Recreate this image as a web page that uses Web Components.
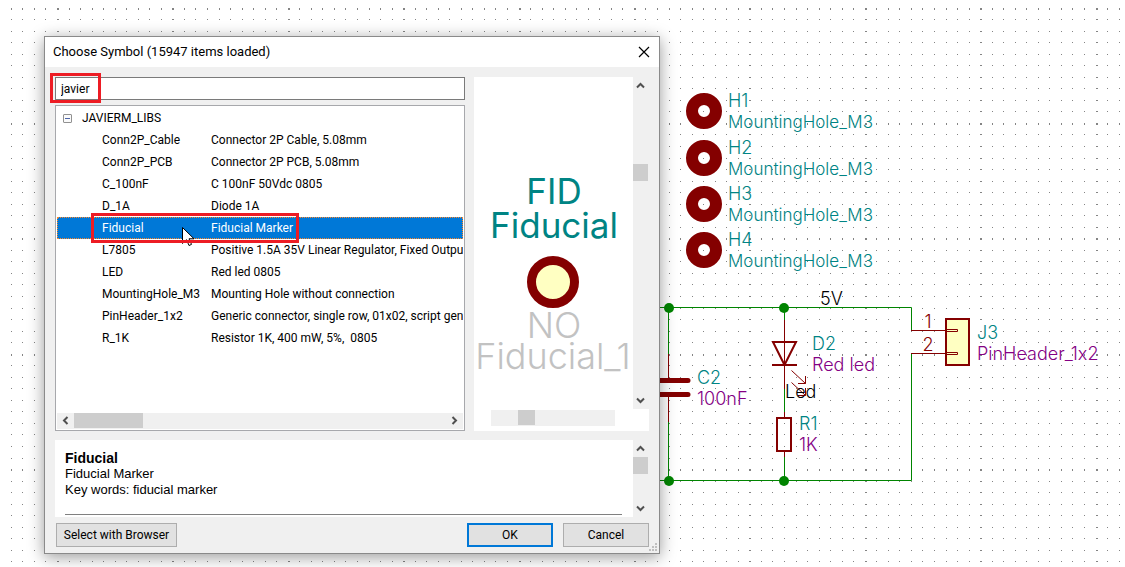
<!DOCTYPE html>
<html lang="en">
<head>
<meta charset="utf-8">
<title>Choose Symbol</title>
<style>
  body { margin: 0; background: #fff; font: 12px/16px Roboto, "Open Sans", sans-serif; color: #000; }
</style>
</head>
<body>
<schematic-editor>
  <symbol-dialog heading="Choose Symbol (15947 items loaded)"></symbol-dialog>
</schematic-editor>

<script>
const define = (name, html, setup) => {
  const template = document.createElement('template');
  template.innerHTML = html;
  customElements.define(name, class extends HTMLElement {
    constructor() {
      super();
      this.attachShadow({ mode: 'open' }).append(template.content.cloneNode(true));
    }
    connectedCallback() { if (setup) setup(this, this.shadowRoot); }
  });
};

/* Scroll bar: two arrow buttons and a thumb; --start and --size place the thumb on the track. */
define('scroll-bar', `
<style>
  :host { display: flex; flex-direction: column; width: 16px; background: #f0f0f0; }
  :host([horizontal]) { flex-direction: row; width: auto; height: 16px; }
  button { flex: none; width: 15px; height: 17px; margin: 0; padding: 0; border: 0; background: none; display: grid; place-items: center; }
  :host([horizontal]) button { width: 17px; height: 15px; }
  :host([horizontal]) svg { transform: rotate(-90deg); }
  :host([bare]) button { visibility: hidden; width: 0; }
  .track { flex: 1; display: flex; flex-direction: column; padding-top: var(--start, 0px); }
  .thumb { width: 15px; height: var(--size, 17px); background: #cdcdcd; }
  :host([horizontal]) .track { flex-direction: row; padding: 0 0 0 var(--start, 0px); }
  :host([horizontal]) .thumb { width: var(--size, 17px); height: 15px; }
  path { fill: none; stroke: #505050; stroke-width: 2; }
</style>
<button tabindex="-1" aria-label="Scroll back"><svg width="9" height="7"><path d="M1 5.5 4.5 2 8 5.5"/></svg></button>
<div class="track"><div class="thumb"></div></div>
<button tabindex="-1" aria-label="Scroll forward"><svg width="9" height="7"><path d="M1 1.500 4.500 5 8 1.500"/></svg></button>`);

/* Red rectangle that calls out the content beneath it. */
define('call-out', `
<style>
  :host { position: absolute; box-sizing: border-box; border: 3px solid #ed1c24; pointer-events: none; z-index: 2; }
</style>`);

define('push-button', `
<style>
  :host { display: block; width: 86px; }
  :host([wide]) { width: 121px; }
  button { box-sizing: border-box; width: 100%; height: 24px; margin: 0; padding: 0; border: 1px solid #adadad; background: #e1e1e1; font: inherit; color: #000; white-space: nowrap; }
  :host([primary]) button { border: 2px solid #0078d7; }
</style>
<button type="button"><slot></slot></button>`);

define('search-field', `
<style>
  :host { display: block; position: relative; }
  input { display: block; box-sizing: border-box; width: 100%; height: 23px; margin: 0; padding: 0 5px; border: 1px solid #7a7a7a; border-radius: 0; background: #fff; font: inherit; color: #000; outline: 0; }
  call-out { left: -5px; top: -4px; width: 51px; height: 30px; }
</style>
<input type="text" aria-label="Filter" value="javier">
<call-out></call-out>`);

define('symbol-tree', `
<style>
  :host { display: flex; flex-direction: column; box-sizing: border-box; padding: 1px; border: 1px solid #a7a8ac; background: #fff; overflow: hidden; }
  .rows { flex: 1; }
  table { width: 100%; border-collapse: collapse; table-layout: fixed; }
  td { height: 22px; padding: 0; white-space: nowrap; overflow: hidden; line-height: 20px; }
  td:first-child { width: 154px; }
  .name { padding-left: 45px; box-sizing: border-box; }
  .lib { display: flex; align-items: center; gap: 10px; height: 22px; padding-left: 6px; }
  .lib button { box-sizing: border-box; width: 9px; height: 9px; padding: 0; border: 1px solid #919191; border-radius: 1px; background: #fafafa; display: grid; place-items: center; }
  .lib i { width: 5px; height: 1px; background: #4b63a7; }
  tr.selected { background: #0078d7; color: #fff; outline: 1px dotted #ff8728; outline-offset: -1px; position: relative; }
  tr.selected td { overflow: visible; }
  call-out { left: 34px; top: -4px; width: 208px; height: 30px; }
  .cursor { position: absolute; left: 125px; top: 10px; z-index: 1; }
  scroll-bar { --size: 69px; }
</style>
<div class="rows"><table aria-label="Symbols"><tbody></tbody></table></div>
<scroll-bar horizontal></scroll-bar>`, (host, root) => {
  const parts = [
    ['Conn2P_Cable', 'Connector 2P Cable, 5.08mm'],
    ['Conn2P_PCB', 'Connector 2P PCB, 5.08mm'],
    ['C_100nF', 'C 100nF 50Vdc 0805'],
    ['D_1A', 'Diode 1A'],
    ['Fiducial', 'Fiducial Marker'],
    ['L7805', 'Positive 1.5A 35V Linear Regulator, Fixed Output'],
    ['LED', 'Red led 0805'],
    ['MountingHole_M3', 'Mounting Hole without connection'],
    ['PinHeader_1x2', 'Generic connector, single row, 01x02, script gen'],
    ['R_1K', 'Resistor 1K, 400 mW, 5%,&nbsp; 0805']
  ];
  const marks = `<call-out></call-out><svg class="cursor" width="14" height="20"><path d="M.500 .500V16.500L4.500 12.700 7 18.500 9.500 17.400 7 11.800H12Z" fill="#fff" stroke="#000"/></svg>`;
  root.querySelector('tbody').innerHTML =
    `<tr><td><div class="lib"><button aria-label="Collapse"><i></i></button>JAVIERM_LIBS</div></td><td></td></tr>` +
    parts.map(([name, text]) => name === 'Fiducial'
      ? `<tr class="selected"><td class="name">${name}</td><td>${text}${marks}</td></tr>`
      : `<tr><td class="name">${name}</td><td>${text}</td></tr>`).join('');
});

define('symbol-preview', `
<style>
  :host { display: grid; grid-template-columns: 1fr 16px; grid-template-rows: 1fr 22px; background: #fff; }
  .view { width: 100%; height: 100%; overflow: hidden; display: block; }
  text { font-family: Inter, "Noto Sans", sans-serif; font-size: 35px; text-anchor: middle; fill: #008484; }
  .pale { fill: #c2c2c2; font-weight: 300; font-size: 36px; }
  .v { --start: 70px; }
  .h { --start: 27px; margin: 1px 18px 5px 17px; }
</style>
<svg class="view" role="img" aria-label="Fiducial symbol">
  <text x="80" y="127">FID</text>
  <text x="80" y="161">Fiducial</text>
  <circle cx="79" cy="205" r="21.500" fill="#ffffc2" stroke="#840000" stroke-width="9"/>
  <text class="pale" x="80" y="261">NO</text>
  <text class="pale" x="79" y="292">Fiducial_1</text>
</svg>
<scroll-bar class="v"></scroll-bar>
<scroll-bar class="h" horizontal bare></scroll-bar>`);

define('symbol-details', `
<style>
  :host { display: grid; grid-template-columns: 1fr 16px; height: 77px; background: #fff; font: 13px/16px "Liberation Sans", Arial, sans-serif; }
  .text { padding: 10px 11px 0 10px; }
  h2, p { margin: 0; font-size: 13px; line-height: 16px; }
  h2 { font-size: 14px; }
  hr { margin: 16px 0 0; border: 0; border-top: 1px solid #808080; }
</style>
<div class="text"><h2>Fiducial</h2><p>Fiducial Marker</p><p>Key words: fiducial marker</p><hr></div>
<scroll-bar></scroll-bar>`);

define('symbol-dialog', `
<style>
  :host { position: absolute; left: 44px; top: 36px; box-sizing: border-box; width: 616px; max-width: 100%; border: 1px solid #8a8a8a; background: #f0f0f0; box-shadow: 0 3px 15px rgba(0,0,0,.4); }
  header { display: flex; align-items: center; justify-content: space-between; height: 30px; padding: 0 9px 0 8px; background: #fff; }
  h1 { margin: 0; font: inherit; font-size: 13px; }
  .close { width: 12px; height: 12px; padding: 0; border: 0; background: none; display: grid; }
  main { display: grid; grid-template-columns: 410px 1fr; gap: 9px; padding: 10px 10px 0; }
  .find { display: grid; grid-template-rows: auto 326px; gap: 5px; }
  symbol-details { grid-column: 1 / -1; }
  footer { display: flex; gap: 10px; padding: 6px 10px 6px 11px; }
  .gap { flex: 1; }
  .grip { position: absolute; right: 2px; bottom: 2px; fill: #bfbfbf; }
</style>
<header><h1></h1><button class="close" aria-label="Close"><svg width="12" height="12"><path d="M1 1 11 11M11 1 1 11" stroke="#000" stroke-width="1.200"/></svg></button></header>
<main>
  <div class="find"><search-field></search-field><symbol-tree></symbol-tree></div>
  <symbol-preview></symbol-preview>
  <symbol-details></symbol-details>
</main>
<footer>
  <push-button wide>Select with Browser</push-button><span class="gap"></span>
  <push-button primary>OK</push-button><push-button>Cancel</push-button>
</footer>
<svg class="grip" width="8" height="8"><path d="M6 0h2v2h-2zM3 3h2v2h-2zM6 3h2v2h-2zM0 6h2v2h-2zM3 6h2v2h-2zM6 6h2v2h-2z"/></svg>`,
(host, root) => { root.querySelector('h1').textContent = host.getAttribute('heading'); });

/* The drawing sheet: a dotted grid, the wires and the parts; dialogs are slotted on top. */
define('schematic-editor', `
<style>
  :host { display: block; position: relative; height: 100vh; overflow: hidden; }
  svg { display: block; width: 100%; height: 100%; }
  .grid { fill: #848484; shape-rendering: crispEdges; }
  .wire, .pin, .body { fill: none; stroke: #008400; }
  .pin, .body { stroke: #840000; }
  .body { stroke-width: 2; }
  text { font-family: Inter, "Noto Sans", sans-serif; font-size: 18px; font-weight: 300; font-feature-settings: "calt" 0; }
  .holes .name { font-size: 17px; }
  .ref { fill: #008484; }
  .val { fill: #840084; }
  .num { fill: #840000; text-anchor: middle; }
</style>
<svg role="img" aria-label="Schematic">
  <path class="grid"/>
  <g class="holes"></g>
  <path class="wire" d="M650 307.500H911.500V330M650 480.500H911.500V353M668.500 308V354M668.500 422V481M784.500 308V320M784.500 389V412M784.500 457V481"/>
  <g fill="#008400"><circle cx="669" cy="308" r="5"/><circle cx="784" cy="308" r="5"/><circle cx="669" cy="481" r="5"/><circle cx="784" cy="481" r="5"/></g>
  <path class="pin" d="M668.500 354V378M668.500 397V422M784.500 320V389M784.500 412V417M784.500 452V457M911 330.500H946M911 353.500H946"/>
  <path d="M650 380.500H688M650 394.500H688" stroke="#840000" stroke-width="5" stroke-linecap="round"/>
  <path class="body" d="M773 342H796L784.500 365ZM772 365H797M777 418H791V451H777Z"/>
  <path class="pin" d="M791.500 370.500 805.500 383.500M805.500 376V383.500H798M791.500 382.500 805.500 395.500M805.500 388V395.500H798"/>
  <rect class="body" x="946" y="319" width="23" height="46" style="fill:#ffffc2"/>
  <path class="pin" d="M946 329.500H957.500V331.500H946M946 352.500H957.500V354.500H946"/>
  <text x="820" y="305">5V</text>
  <text x="785" y="398">Led</text>
  <text class="ref" x="697" y="384">C2</text><text class="val" x="697" y="405">100nF</text>
  <text class="ref" x="812" y="350">D2</text><text class="val" x="812" y="371">Red led</text>
  <text class="ref" x="799" y="430">R1</text><text class="val" x="799" y="451">1K</text>
  <text class="ref" x="977" y="339">J3</text><text class="val" x="977" y="360">PinHeader_1x2</text>
  <text class="num" x="928" y="328">1</text><text class="num" x="928" y="351">2</text>
</svg>
<slot></slot>`, (host, root) => {
  root.querySelector('.holes').innerHTML = [111, 158, 204, 250].map((y, i) =>
    `<circle cx="704" cy="${y}" r="12" fill="none" stroke="#840000" stroke-width="12"/>
     <text class="ref" x="728" y="${y - 4}">H${i + 1}</text><text class="ref name" x="728" y="${y + 17}">MountingHole_M3</text>`).join('');
  const pitch = 11.54;
  const draw = () => {
    let d = '';
    for (let r = 0; r * pitch < innerHeight; r++) {
      const tall = r % 10 === 0 ? 2 : 1, y = Math.round(7.500 + r * pitch);
      for (let c = 0; c * pitch < innerWidth; c++) {
        const wide = c % 10 === 4 ? 2 : 1, x = Math.round(10.800 + c * pitch);
        d += `M${x} ${y}h${wide}v${tall}h-${wide}z`;
      }
    }
    root.querySelector('.grid').setAttribute('d', d);
  };
  draw();
  addEventListener('resize', draw);
});
</script>
</body>
</html>
